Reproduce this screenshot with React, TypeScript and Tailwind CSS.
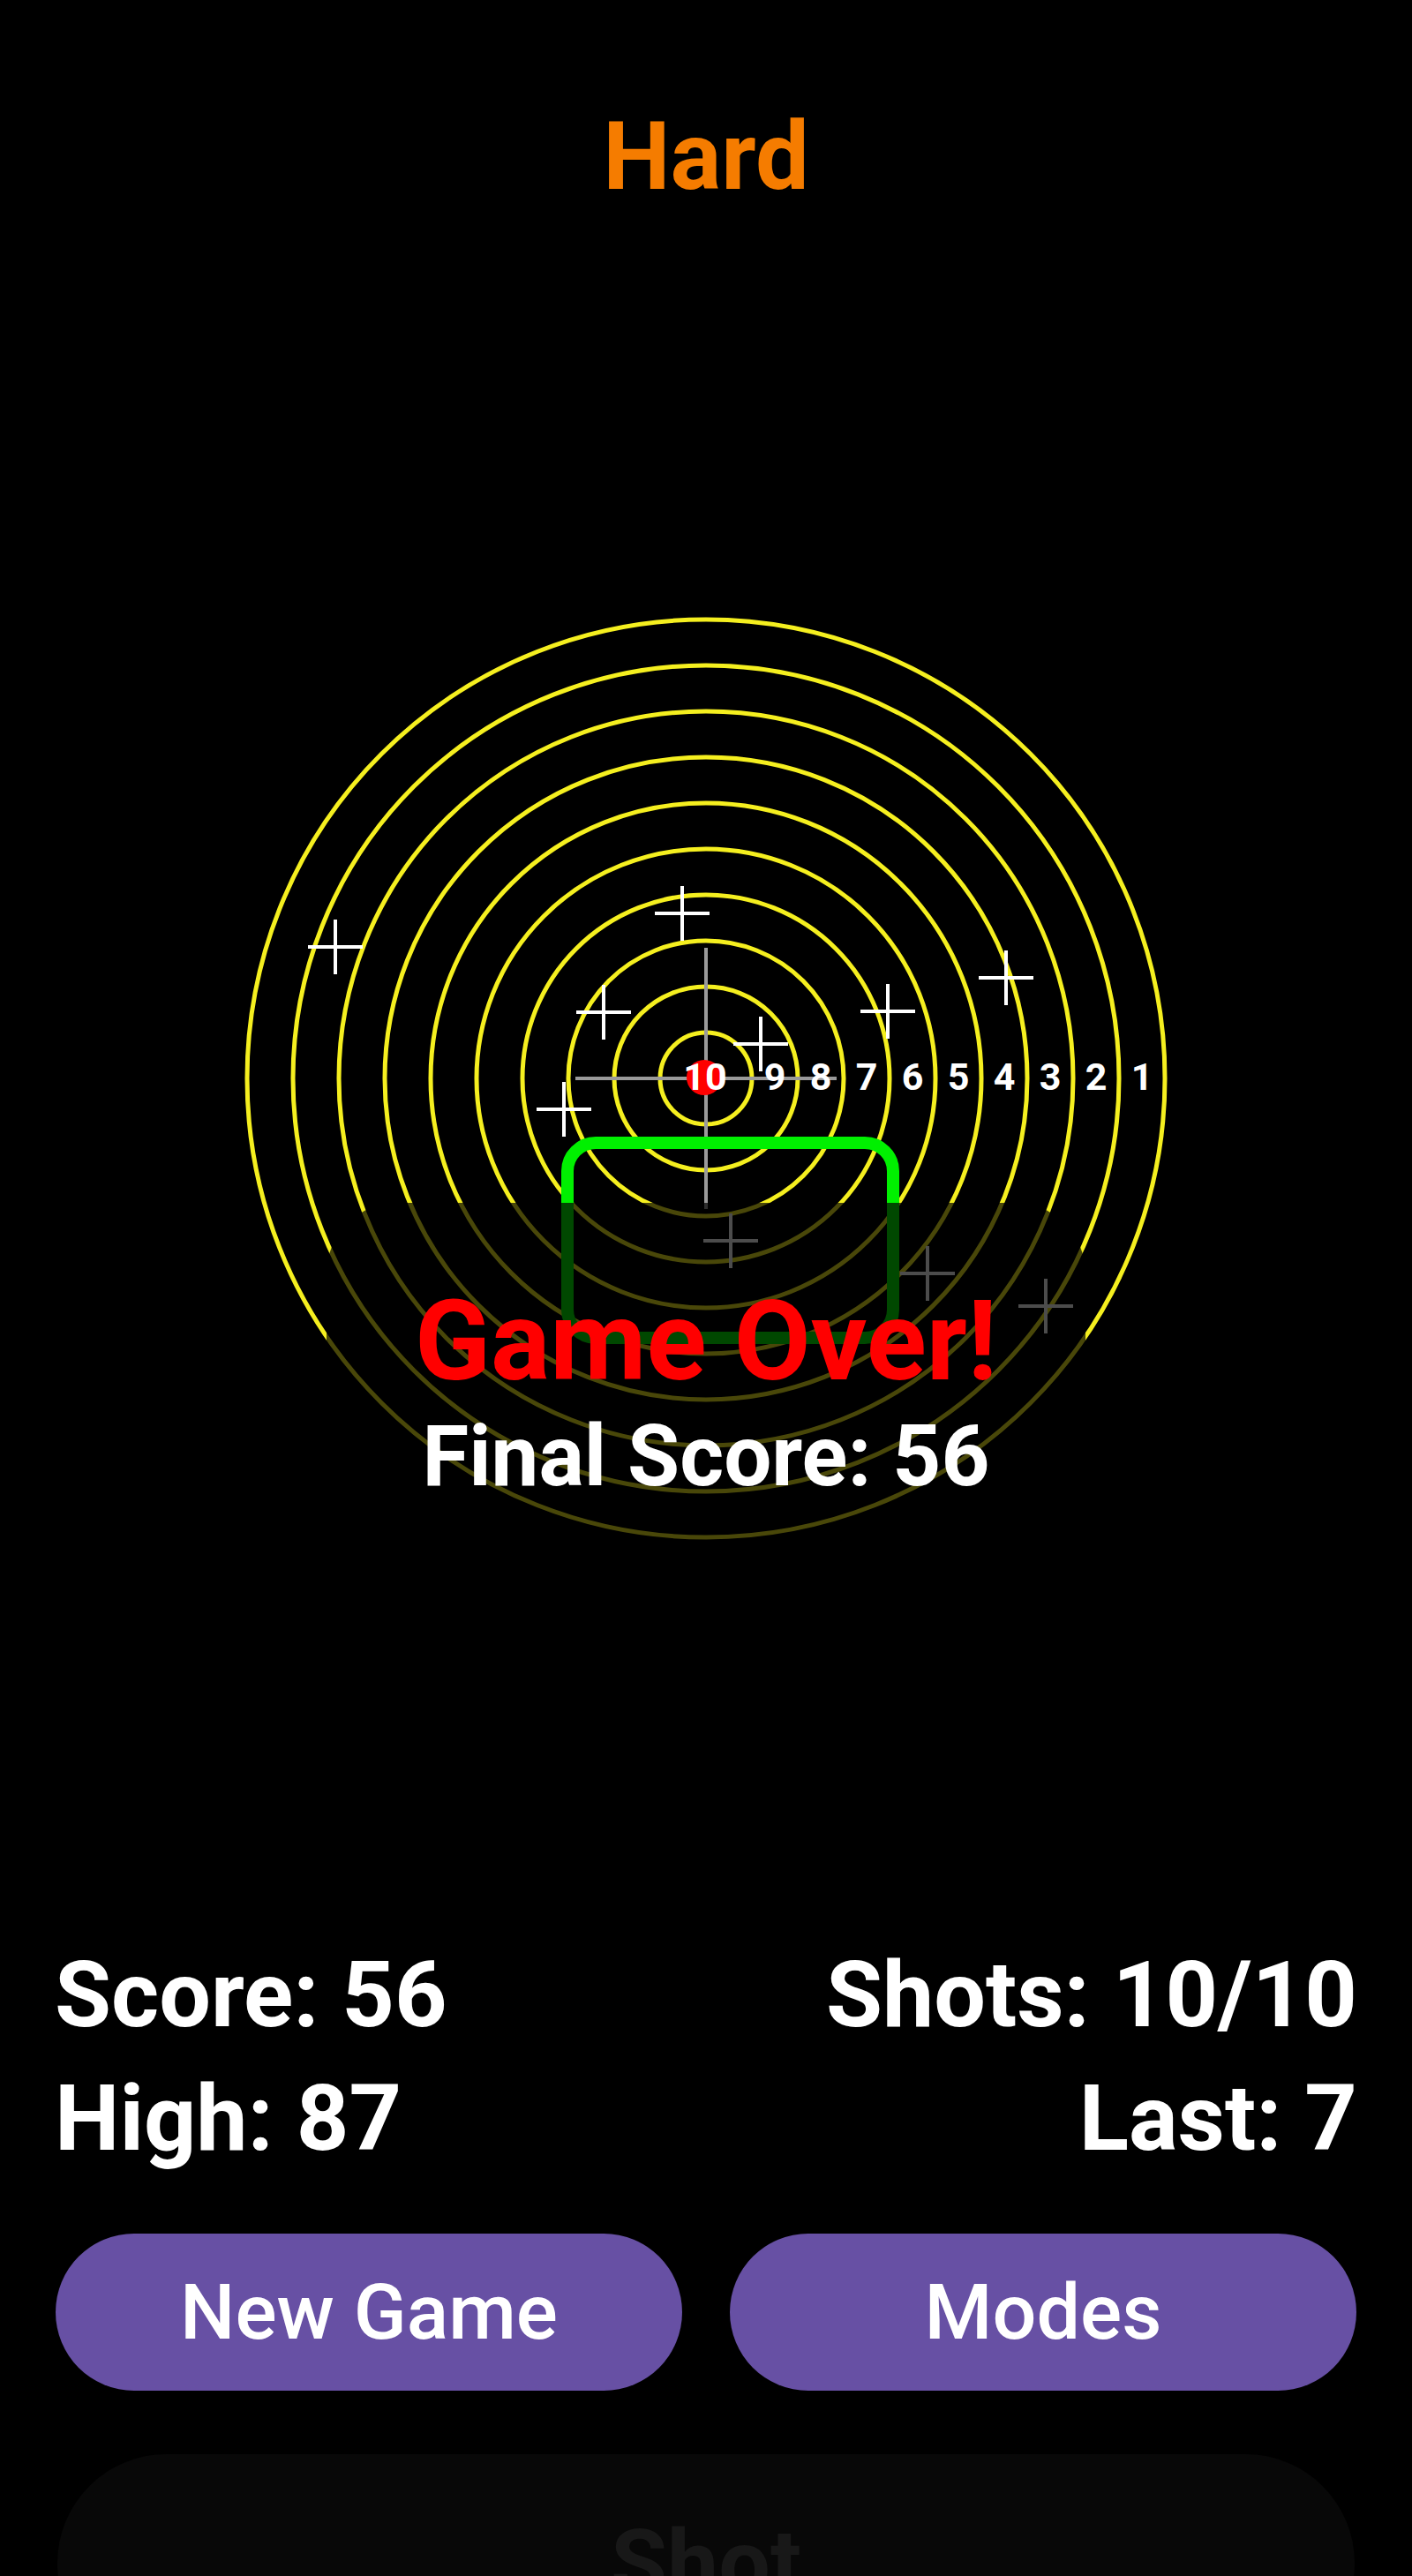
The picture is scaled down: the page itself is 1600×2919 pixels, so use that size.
import React from 'react';

// target geometry, in the target box's own pixels
const CX = 800;
const CY = 991;
const RING = 52;

const hits = [
  { x: 380, y: 842 },
  { x: 773, y: 804 },
  { x: 684, y: 916 },
  { x: 862, y: 952 },
  { x: 1006, y: 915 },
  { x: 1140, y: 877 },
  { x: 639, y: 1026 },
  { x: 828, y: 1175 },
  { x: 1051, y: 1212 },
  { x: 1185, y: 1249 },
];

function Target() {
  const rings = Array.from({ length: 10 }, (_, i) => i + 1);
  return (
    <svg width={1600} height={1960} viewBox="0 0 1600 1960" className="block">
      {rings.map((k) => (
        <circle key={k} cx={CX} cy={CY} r={RING * k} fill="none" stroke="#f5ef1f" strokeWidth={5} />
      ))}

      {/* crosshair */}
      <line x1={CX - 148} y1={CY} x2={CX + 148} y2={CY} stroke="#9a9a9a" strokeWidth={4} />
      <line x1={CX} y1={CY - 148} x2={CX} y2={CY + 148} stroke="#9a9a9a" strokeWidth={4} />

      <circle cx={CX - 2} cy={CY - 1} r={20} fill="#ff0000" />

      {/* ring scores */}
      {rings.map((k) => {
        const n = 11 - k;
        const x = n === 10 ? CX - 1 : CX + (10 - n + 0.5) * RING;
        return (
          <text
            key={n}
            x={x}
            y={CY - 2}
            fill="#ffffff"
            fontFamily="Roboto, 'Liberation Sans', sans-serif"
            fontWeight={700}
            fontSize={43}
            textAnchor="middle"
            dominantBaseline="central"
          >
            {n}
          </text>
        );
      })}

      {/* shot marks */}
      {hits.map((h, i) => (
        <g key={i} stroke="#ffffff" strokeWidth={4}>
          <line x1={h.x - 31} y1={h.y} x2={h.x + 31} y2={h.y} />
          <line x1={h.x} y1={h.y - 31} x2={h.x} y2={h.y + 31} />
        </g>
      ))}

      {/* aim box */}
      <rect x={643} y={1064} width={369} height={221} rx={32} fill="none" stroke="#00f000" strokeWidth={14} />
    </svg>
  );
}

export default function App() {
  return (
    <div
      className="w-[1600px] h-[2919px] overflow-hidden bg-black text-white"
      style={{ fontFamily: "Roboto, 'Liberation Sans', sans-serif" }}
    >
      <h1 className="pt-[123px] text-center text-[108px] leading-[108px] font-bold text-[#f57c00]">Hard</h1>

      {/* Target + game over overlay */}
      <div className="relative h-[1960px]">
        <Target />
        <div className="absolute left-[370px] top-[1132px] w-[860px] h-[640px] rounded-[80px] bg-black/70 flex flex-col items-center pt-[94px]">
          <div className="text-[126px] leading-[126px] font-bold text-[#ff0000]">Game Over!</div>
          <div className="mt-[19px] text-[96px] leading-[96px] font-bold text-white">Final Score: 56</div>
        </div>
      </div>

      {/* Stats */}
      <div className="grid grid-cols-2 px-[62px] text-[104px] leading-[140px] font-bold">
        <div>Score: 56</div>
        <div className="text-right">Shots: 10/10</div>
        <div>High: 87</div>
        <div className="text-right">Last: 7</div>
      </div>

      {/* Actions */}
      <div className="mt-[60px] flex gap-[54px] px-[63px]">
        <button className="flex-1 h-[178px] rounded-full bg-[#6750a4] text-[88px] font-medium text-white">
          New Game
        </button>
        <button className="flex-1 h-[178px] rounded-full bg-[#6750a4] text-[88px] font-medium text-white">
          Modes
        </button>
      </div>

      <div className="mt-[72px] mx-[65px] h-[247px] rounded-full bg-[#080808] flex items-center justify-center">
        <span className="text-[104px] leading-[104px] font-bold text-[#181818]">Shot</span>
      </div>
    </div>
  );
}
